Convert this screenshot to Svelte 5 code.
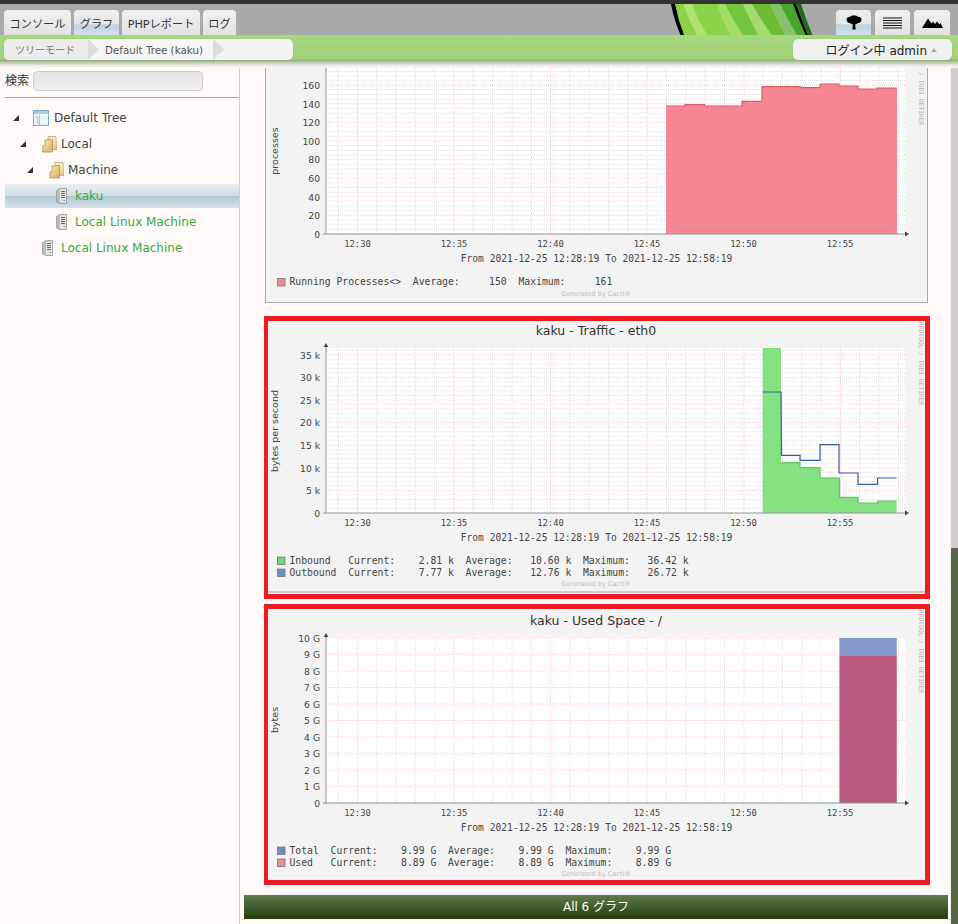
<script>
  function xTicks() {
    const out = { minor: '', major: '' };
    for (let k = -1; k <= 28; k++) {
      const x = +(357.4 + 19.32 * k).toFixed(1);
      if (x < 327 || x > 905) continue;
      if (k % 5 === 0) out.major += `M${x} 0V2000`;
      else out.minor += `M${x} 0V2000`;
    }
    return out;
  }
  const xt = xTicks();
  const times = [['12:30', 357.5], ['12:35', 454], ['12:40', 550.5], ['12:45', 647], ['12:50', 743.5], ['12:55', 840]];

  function grid(c) {
    let minor = '', major = '';
    const n = Math.ceil((c.base - c.top) / (c.major / c.div));
    for (let i = 1; i <= n; i++) {
      const y = +(c.base - (i * c.major) / c.div).toFixed(1);
      if (y < c.top) break;
      if (i % c.div === 0) major += `M326 ${y}H905`;
      else minor += `M326 ${y}H905`;
    }
    return { minor, major };
  }
  function steps(pts, base) {
    let d = `M${pts[0][0]} ${base}`;
    for (const [x0, x1, y] of pts) d += `L${x0} ${y}L${x1} ${y}`;
    return d + `L${pts[pts.length - 1][1]} ${base}Z`;
  }
  function line(pts) {
    let d = '';
    pts.forEach(([x0, x1, y], i) => { d += `${i ? 'L' : 'M'}${x0} ${y}L${x1} ${y}`; });
    return d;
  }

  const procPts = [[666,685,106],[685,704.5,104.7],[704.5,742,106],[742,762,101.3],[762,800,86.7],[800,820,87.7],[820,839,84],[839,858,86],[858,877,89],[877,897,88]];
  const inPts = [[762.7,781,348],[781,800,462.7],[800,820,467.7],[820,839.5,478],[839.5,858,497.3],[858,877.5,503],[877.5,896.5,501]];
  const outPts = [[762.7,781,392],[781.5,800,455.3],[800,820,460.3],[820,839,444.7],[839,858,473],[858,877.5,484.3],[877.5,896.5,478]];

  const charts = [
    {
      kind: 'plain', vb: [266, 68, 661, 234], base: 234, top: 68, major: 18.6, div: 4, arrowTop: false,
      labels: ['0','20','40','60','80','100','120','140','160'],
      ylabel: 'processes', ylabelY: 151, timeY: 243.5, fromY: 258.5, genY: 294,
      legend: [{ y: 282, c: '#f08a94', t: 'Running Processes<>  Average:     150  Maximum:     161' }],
      areas: [{ d: steps(procPts, 234), f: '#f6808c' }],
      lines: [{ d: line(procPts), s: '#dd5a6c' }]
    },
    {
      kind: 'boxed', vb: [268, 321, 657, 273], base: 513, top: 348, major: 22.6, div: 5, arrowTop: true,
      title: 'kaku - Traffic - eth0', titleY: 334.5,
      labels: ['0','5 k','10 k','15 k','20 k','25 k','30 k','35 k'],
      ylabel: 'bytes per second', ylabelY: 431, timeY: 522.5, fromY: 537.5, genY: 584, rule: 592,
      legend: [
        { y: 560.5, c: '#6fd873', t: 'Inbound   Current:    2.81 k  Average:   10.60 k  Maximum:   36.42 k' },
        { y: 572.5, c: '#6f8fc0', t: 'Outbound  Current:    7.77 k  Average:   12.76 k  Maximum:   26.72 k' }
      ],
      areas: [{ d: steps(inPts, 513), f: '#7de07c' }],
      lines: [{ d: line(inPts.slice(1)), s: '#5cc862' }, { d: line(outPts), s: '#3b5ba5' }]
    },
    {
      kind: 'boxed', vb: [268, 609, 657, 271], base: 803, top: 638, major: 16.5, div: 1, arrowTop: true,
      title: 'kaku - Used Space - /', titleY: 624.5,
      labels: ['0','1 G','2 G','3 G','4 G','5 G','6 G','7 G','8 G','9 G','10 G'],
      ylabel: 'bytes', ylabelY: 720, timeY: 812.5, fromY: 827.5, genY: 874,
      legend: [
        { y: 850.5, c: '#6f8fc0', t: 'Total  Current:    9.99 G  Average:    9.99 G  Maximum:    9.99 G' },
        { y: 862.5, c: '#f08a94', t: 'Used   Current:    8.89 G  Average:    8.89 G  Maximum:    8.89 G' }
      ],
      areas: [
        { d: 'M839.4 638H896.8V656H839.4Z', f: '#7f93c9' },
        { d: 'M839.4 656H896.8V803H839.4Z', f: '#b5527a' }
      ],
      lines: []
    }
  ].map((c) => ({ ...c, g: grid(c) }));

  const tree = [
    { label: 'Default Tree', indent: 8, arrow: true, icon: 'tree' },
    { label: 'Local', indent: 15, arrow: true, icon: 'folder' },
    { label: 'Machine', indent: 22, arrow: true, icon: 'folder' },
    { label: 'kaku', indent: 29, icon: 'server', host: true, selected: true },
    { label: 'Local Linux Machine', indent: 29, icon: 'server', host: true },
    { label: 'Local Linux Machine', indent: 15, icon: 'server', host: true }
  ];
</script>

{#snippet chart(c)}
  <svg class="rrd" width={c.vb[2]} height={c.vb[3]} viewBox={c.vb.join(' ')}>
    <rect x={c.vb[0]} y={c.vb[1]} width={c.vb[2]} height={c.vb[3]} fill="#f3f3f3" />
    <rect x="326" y={c.top} width="579" height={c.base - c.top} fill="#fff" />
    <clipPath id={'clip' + c.top}><rect x="326" y={c.top} width="579" height={c.base - c.top} /></clipPath>
    <g clip-path={'url(#clip' + c.top + ')'}>
      <path d={xt.minor} class="minor" />
      <path d={c.g.minor} class="minor" />
      <path d={xt.major} class="major" />
      <path d={c.g.major} class="major" />
    </g>
    {#each c.areas as a}<path d={a.d} fill={a.f} fill-opacity="0.95" />{/each}
    {#each c.lines as l}<path d={l.d} fill="none" stroke={l.s} stroke-width="1.2" />{/each}

    <path d={`M326 ${c.arrowTop ? c.top - 2 : c.top}V${c.base}`} class="axis" />
    <path d={`M323 ${c.base}H906`} class="axis" />
    <path d={`M905 ${c.base - 2.5}L909 ${c.base}L905 ${c.base + 2.5}Z`} fill="#444" />
    {#if c.arrowTop}<path d={`M323.7 ${c.top - 1}L326 ${c.top - 5}L328.3 ${c.top - 1}Z`} fill="#444" />{/if}

    {#if c.title}<text class="title" x="596" y={c.titleY} text-anchor="middle">{c.title}</text>{/if}
    {#each c.labels as lab, i}
      <text class="ytick" x="320" y={c.base - i * c.major + 3.7} text-anchor="end">{lab}</text>
    {/each}
    <text class="ylabel" transform={`translate(277.5 ${c.ylabelY}) rotate(-90)`} text-anchor="middle">{c.ylabel}</text>
    {#each times as [t, x]}
      <text class="tick" {x} y={c.timeY + 3.2} text-anchor="middle">{t}</text>
    {/each}
    <text class="from" x="596.5" y={c.fromY + 3.2} text-anchor="middle">From 2021-12-25 12:28:19 To 2021-12-25 12:58:19</text>
    {#each c.legend as l}
      <rect x="277.5" y={l.y - 3.5} width="7.5" height="7.5" fill={l.c} stroke="#777" stroke-width="0.8" />
      <text class="legend" x="289.5" y={l.y + 3.2}>{l.t}</text>
    {/each}
    <text class="gen" x="596" y={c.genY + 2.2} text-anchor="middle">Generated by Cacti®</text>
    <text class="wm" transform={`translate(919 ${c.kind === 'plain' ? 42 : c.vb[1] + 1}) rotate(90)`}>RRDTOOL / TOBI OETIKER</text>
    {#if c.rule}<path d={`M268 ${c.rule}H925`} stroke="#a4a4a4" stroke-width="1" />{/if}
  </svg>
{/snippet}

{#snippet icon(kind)}
  {#if kind === 'tree'}
    <svg width="16" height="16" viewBox="0 0 16 16">
      <rect x="0.5" y="0.5" width="15" height="15" fill="#eef5fb" stroke="#7fa8cc" />
      <rect x="1" y="1" width="14" height="3" fill="#a8cbe6" />
      <path d="M6.500 4.500V15" stroke="#9fbdd6" stroke-width="0.8" />
      <path d="M2.500 7h2.500M3.500 9h2M3.500 11h2M3.500 13h2" stroke="#7a93a8" stroke-width="0.8" />
    </svg>
  {:else if kind === 'folder'}
    <svg width="15" height="17" viewBox="0 0 15 17">
      <defs>
        <linearGradient id="fb" x1="0" y1="0" x2="0" y2="1"><stop offset="0" stop-color="#fdf3cf" /><stop offset="1" stop-color="#e9c987" /></linearGradient>
        <linearGradient id="ff" x1="0" y1="0" x2="1" y2="1"><stop offset="0" stop-color="#fbe9b4" /><stop offset="1" stop-color="#d9ad62" /></linearGradient>
      </defs>
      <path d="M6 0.500h8L14.500 13.500H6Z" fill="url(#fb)" stroke="#b89c68" stroke-width="0.7" />
      <path d="M0.500 16L1 10L3 9.500V4L10.500 3.500V16Z" fill="url(#ff)" stroke="#a98a50" stroke-width="0.7" />
    </svg>
  {:else}
    <svg width="11" height="16" viewBox="0 0 11 16">
      <path d="M0.500 2.500L4 0.500H10.500V15.500H4L0.500 14Z" fill="#b9bdbd" stroke="#8f9494" stroke-width="0.7" />
      <rect x="4" y="1.200" width="6" height="13.600" fill="#e4e6e6" />
      <path d="M5 3.500h4M5 5.500h4M5 7.500h4M5 9.500h4" stroke="#666b6b" stroke-width="1" />
      <path d="M7.500 12.500h1.500" stroke="#5f9f5f" stroke-width="1" />
    </svg>
  {/if}
{/snippet}

<div class="page">
  <header>
    <div class="topline"></div>
    <div class="tabbar">
      <svg class="logo" width="144" height="31" viewBox="670 4 144 31">
        <path d="M674 4H792Q799 19 806 35H684Q678 20 674 4Z" fill="#8cd24a" />
        <path d="M683 4H692Q698 20 707 35H697Q689 20 683 4Z" fill="#aee36f" />
        <path d="M717 4H725Q733 20 743 35H730Q722 20 717 4Z" fill="#a5dc68" />
        <path d="M725 4H743Q750 20 758 35H743Q733 20 725 4Z" fill="#74c63f" />
        <path d="M743 4H752Q761 20 772 35H758Q750 20 743 4Z" fill="#a5da6e" />
        <path d="M752 4H770Q777 20 785 35H772Q761 20 752 4Z" fill="#6cbd33" />
        <path d="M770 4H780Q788 20 797 35H785Q777 20 770 4Z" fill="#86c26a" />
        <path d="M780 4H793Q799 20 806 35H797Q788 20 780 4Z" fill="#4aa52f" />
        <path d="M671 4H675Q678 20 684 35H680.500Q674 20 671 4Z" fill="#000" />
        <path d="M793 4H796Q802 20 808 35H805.500Q799 20 793 4Z" fill="#000" />
        <path d="M796 4H801Q806 20 812.500 35H808Q802 20 796 4Z" fill="#1d6a1a" />
      </svg>
      <nav class="tabs">
        <span class="tab w67">コンソール</span>
        <span class="tab w45 on">グラフ</span>
        <span class="tab w78">PHPレポート</span>
        <span class="tab w33">ログ</span>
      </nav>
      <div class="views">
        <span class="tab view on">
          <svg width="18" height="15" viewBox="0 0 18 15"><path d="M9 0.500C7 0.500 6 1 5 1.800C3 1.800 1.500 3 1.500 4.800C1.500 6.500 3 8 5 8C6 9 7 9.200 7.800 9.300L7.400 14.500H10.600L10.200 9.300C11 9.200 12 9 13 8C15 8 16.500 6.500 16.500 4.800C16.500 3 15 1.800 13 1.800C12 1 11 0.500 9 0.500Z" fill="#000" /></svg>
        </span>
        <span class="tab view">
          <svg width="19" height="12" viewBox="0 0 19 12"><path d="M0 1h19M0 3.500h19M0 6h19M0 8.500h19M0 11h19" stroke="#111" stroke-width="1" /></svg>
        </span>
        <span class="tab view v36">
          <svg width="21" height="10" viewBox="0 0 21 10"><path d="M0 10L6 0.500L9.500 5.500L11 3.500L13 6L15 3.500L17.500 6.500L18.500 5L21 10Z" fill="#000" /></svg>
        </span>
      </div>
    </div>
    <div class="greenbar">
      <div class="crumbs">
        <span class="crumb c1">ツリーモード</span>
        <span class="crumb c2">Default Tree (kaku)</span>
      </div>
      <div class="login">ログイン中 admin <i class="caret"></i></div>
    </div>
    <div class="shade"></div>
  </header>

  <div class="body">
    <aside>
      <div class="search">
        <label for="q">検索</label>
        <input id="q" type="text" />
      </div>
      <ul>
        {#each tree as n}
          <li class:selected={n.selected} class:host={n.host} style={`padding-left:${n.indent}px`}>
            <span class="arrow">{#if n.arrow}<i></i>{/if}</span>
            <span class="ico" class:flush={n.icon === 'tree'}>{@render icon(n.icon)}</span>
            <span>{n.label}</span>
          </li>
        {/each}
      </ul>
    </aside>

    <main>
      <section class="card">{@render chart(charts[0])}</section>
      <section class="boxed first">{@render chart(charts[1])}</section>
      <section class="boxed second">{@render chart(charts[2])}</section>
      <footer>All 6 グラフ</footer>
    </main>

    <div class="scroll"><div class="thumb"></div></div>
  </div>
</div>

<style>
  :global(body) { margin: 0; background: #fff9f7; overflow: hidden; }
  .page {
    width: 958px; height: 924px; overflow: hidden; display: flex; flex-direction: column;
    font-family: "DejaVu Sans", "Noto Sans CJK JP", sans-serif; color: #333; background: #fff9f7;
  }
  header { flex: none; }
  .topline { height: 4px; background: #333; }
  .tabbar {
    position: relative; height: 31px; box-sizing: border-box; padding: 6px 8px 0 4px;
    background: #a9a9a9; display: flex; justify-content: space-between;
  }
  .logo { position: absolute; left: 670px; top: 0; }
  .tabs, .views { display: flex; position: relative; }
  .tabs { gap: 3px; }
  .views { gap: 4px; }
  .tab {
    box-sizing: border-box; height: 25px; border-radius: 4px 4px 0 0;
    background: linear-gradient(#f1f1f1, #e2e2e2);
    font: 11.200px "DejaVu Sans", "Noto Sans CJK JP", sans-serif; color: #333;
    display: flex; align-items: center; justify-content: center;
  }
  .tab.on { background: linear-gradient(#eeeeee 0, #e4e6e7 55%, #bdd3df 60%, #d3e2ea 100%); }
  .w67 { width: 67px; } .w45 { width: 45px; } .w78 { width: 78px; } .w33 { width: 33px; }
  .view { width: 35px; }
  .v36 { width: 36px; }

  .greenbar {
    height: 26px; box-sizing: border-box; padding: 4px 6px 1px 4px;
    background: linear-gradient(#a6d97f, #a1d07c 92%, #8dab74);
    display: flex; justify-content: space-between;
  }
  .crumbs, .login {
    height: 21px; border-radius: 5px; background: #f3f3f3; box-sizing: border-box;
    box-shadow: 0 0 1px #7f9a68;
  }
  .crumbs { width: 289px; display: flex; overflow: hidden; }
  .crumb { position: relative; display: flex; align-items: center; font-size: 10.300px; color: #555; }
  .c1 { width: 84px; padding-left: 11px; box-sizing: border-box; color: #777; background: #ececec; font-family: "Noto Sans CJK JP", sans-serif; font-size: 10px; z-index: 2; }
  .c2 { width: 125px; padding-left: 17px; box-sizing: border-box; background: #f6f6f6; z-index: 1; }
  .crumb::after {
    content: ""; position: absolute; top: 0; bottom: 0; right: -11px; width: 11px;
    background: #dcdcdc; clip-path: polygon(0 0, 100% 50%, 0 100%);
  }
  .login {
    width: 159px; padding-right: 15px; display: flex; align-items: center; justify-content: flex-end;
    font-size: 12px; color: #222; background: #f0f0f0; gap: 4px;
  }
  .caret { width: 0; height: 0; border: 3.500px solid transparent; border-bottom: 4px solid #aaa; border-top: 0; }
  .shade { height: 7px; background: linear-gradient(#aab59f, #e9e9e4 60%, #fbf6f4); }

  .body { flex: 1; display: flex; min-height: 0; }
  aside { width: 240px; flex: none; box-sizing: border-box; border-right: 1px solid #d4d0d0; }
  .search {
    height: 29px; margin-left: 5px; border-bottom: 1px solid #a8a8a8;
    display: flex; align-items: flex-start; gap: 4px; font-size: 12px; color: #333;
  }
  .search label { font: 12px/20px "Noto Sans CJK JP", sans-serif; margin-top: 2px; }
  .search input {
    width: 170px; height: 20px; box-sizing: border-box; margin: 3px 0 0; padding: 0;
    border: 1px solid #cfcfcf; border-radius: 4px; background: linear-gradient(#e6e6e6, #eeeeee);
  }
  ul { list-style: none; margin: 7px 0 0 5px; padding: 0; }
  li { height: 26px; display: flex; align-items: center; box-sizing: border-box; font-size: 12px; color: #444; }
  li.host { color: #35ad3f; }
  li.selected { height: 24px; margin: 1px 0; background: linear-gradient(#e9edf0 0, #d2dde4 48%, #b3c8d6 52%, #d5e2ea 100%); }
  .arrow { width: 20px; flex: none; display: flex; }
  .arrow i { width: 6px; height: 6px; background: #333; clip-path: polygon(100% 0, 100% 100%, 0 100%); }
  .ico { width: 21px; flex: none; padding-left: 2px; box-sizing: border-box; display: flex; }
  .ico.flush { padding-left: 0; }

  main { width: 710px; flex: none; }
  .card {
    width: 663px; box-sizing: border-box; margin-left: 25px;
    border: 1px solid #aaa; border-top: 0; height: 235px; overflow: hidden; background: #f3f3f3;
  }
  .boxed {
    margin-left: 24px; width: 666px; box-sizing: border-box; background: #f3f3f3;
    border: solid #ed1c24; border-width: 5px 5px 5px 4px;
  }
  .first { margin-top: 13px; height: 283px; }
  .second { margin-top: 5px; height: 281px; }
  .rrd { display: block; }
  footer {
    margin: 10px 0 0 4px; width: 704px; height: 24px;
    background: linear-gradient(#5f7b4c, #2c4713 85%, #243b10);
    color: #fff; text-align: center; font: 12px/24px "DejaVu Sans", "Noto Sans CJK JP", sans-serif;
  }
  .scroll { flex: 1; background: #cfcdcd; border-left: 1px solid #f3efee; display: flex; flex-direction: column; justify-content: flex-end; }
  .thumb { height: 376px; background: #556849; }

  .minor { stroke: #d2d2d2; stroke-width: 0.7; stroke-dasharray: 1 1; fill: none; }
  .major { stroke: #f5c4c4; stroke-width: 0.8; stroke-dasharray: 1 1; fill: none; }
  .axis { stroke: #8d9490; stroke-width: 1; fill: none; }
  text { fill: #444; white-space: pre; }
  .title { font: 12.500px "DejaVu Sans", sans-serif; fill: #333; }
  .ytick { font: 9.200px "DejaVu Sans", sans-serif; }
  .ylabel { font: 9.500px "DejaVu Sans", sans-serif; }
  .tick { font: 8.800px "DejaVu Sans Mono", monospace; }
  .from { font: 9.600px "DejaVu Sans Mono", monospace; }
  .legend { font: 9.750px "DejaVu Sans Mono", monospace; }
  .gen { font: 6.500px "DejaVu Sans", sans-serif; fill: #bbb; }
  .wm { font: 6.300px "DejaVu Sans Mono", monospace; fill: #b5b5b5; }
</style>
